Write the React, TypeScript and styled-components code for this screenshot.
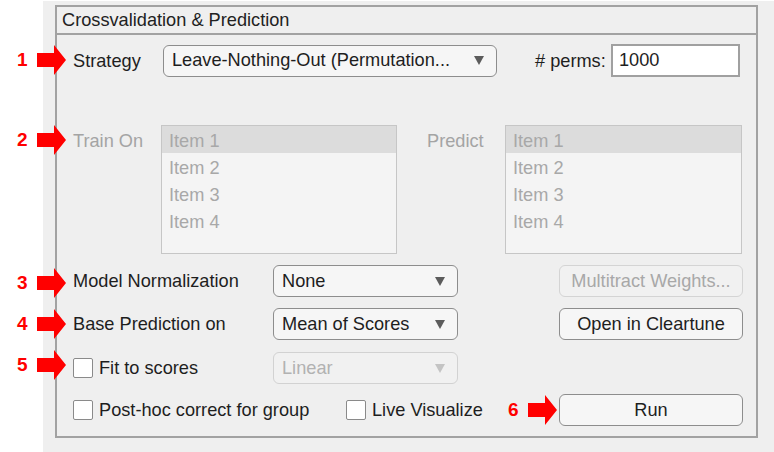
import React from "react";
import styled, { createGlobalStyle } from "styled-components";

const GlobalStyle = createGlobalStyle`
  html, body { margin: 0; padding: 0; background: #ffffff; }
  body { font-family: "Liberation Sans", Arial, Helvetica, sans-serif; }
  * { box-sizing: border-box; }
`;

const Page = styled.div`
  position: relative;
  width: 774px;
  height: 452px;
  display: flex;
  background: #ffffff;
  font-size: 18.2px;
  color: #1e1e1e;
`;

const Gutter = styled.div`
  width: 43px;
  flex: none;
`;

const Surface = styled.div`
  flex: 1;
  margin-top: 1px;
  background: #efefef;
  padding: 4px 16px 14px 12px;
  display: flex;
`;

const Panel = styled.section`
  flex: 1;
  border: 2px solid #a2a2a2;
  display: flex;
  flex-direction: column;
`;

const PanelTitle = styled.header`
  height: 28px;
  border-bottom: 2px solid #a2a2a2;
  padding-left: 5px;
  display: flex;
  align-items: center;
  color: #222;
`;

const PanelBody = styled.div`
  display: flex;
  flex-direction: column;
  padding: 9px 0 0 16px;
`;

const Row = styled.div<{ $top?: number; $h?: number; $align?: string }>`
  display: flex;
  align-items: ${(p) => p.$align ?? "center"};
  margin-top: ${(p) => p.$top ?? 0}px;
  height: ${(p) => p.$h ?? 32}px;
`;

const Label = styled.span<{ $w: number; $disabled?: boolean; $ml?: number; $lh?: number }>`
  width: ${(p) => p.$w}px;
  flex: none;
  margin-left: ${(p) => p.$ml ?? 0}px;
  color: ${(p) => (p.$disabled ? "#a4a4a4" : "#1e1e1e")};
  line-height: ${(p) => p.$lh ?? 22}px;
  white-space: nowrap;
`;

const Select = styled.div<{ $w: number; $h?: number; $disabled?: boolean }>`
  width: ${(p) => p.$w}px;
  height: ${(p) => p.$h ?? 32}px;
  flex: none;
  display: flex;
  align-items: center;
  justify-content: space-between;
  padding: 0 12px 0 8px;
  border: 1px solid ${(p) => (p.$disabled ? "#d2d2d2" : "#8d8d8d")};
  border-radius: 6px;
  background: ${(p) => (p.$disabled ? "#f1f1f1" : "#f6f6f6")};
  color: ${(p) => (p.$disabled ? "#b2b2b2" : "#1e1e1e")};
  white-space: nowrap;
  overflow: hidden;
`;

const Caret = styled.span<{ $disabled?: boolean }>`
  width: 0;
  height: 0;
  border-left: 5.5px solid transparent;
  border-right: 5.5px solid transparent;
  border-top: 9px solid ${(p) => (p.$disabled ? "#c4c4c4" : "#5c5c5c")};
  flex: none;
`;

const TextInput = styled.div`
  width: 129px;
  height: 33px;
  flex: none;
  margin-left: 3px;
  background: #ffffff;
  border: 2px solid #a0a0a0;
  display: flex;
  align-items: center;
  padding-left: 6px;
  color: #1e1e1e;
`;

const ListBox = styled.ul<{ $w: number }>`
  width: ${(p) => p.$w}px;
  height: 129px;
  flex: none;
  margin: 0;
  padding: 0;
  list-style: none;
  border: 1px solid #c6c6c6;
  background: #f4f4f4;
`;

const ListItem = styled.li<{ $selected?: boolean }>`
  height: 27px;
  padding: 2px 0 0 7px;
  line-height: 27px;
  color: #a8a8a8;
  background: ${(p) => (p.$selected ? "#dcdcdc" : "transparent")};
`;

const Button = styled.div<{ $ml?: number; $disabled?: boolean; $h?: number }>`
  width: 184px;
  height: ${(p) => p.$h ?? 32}px;
  flex: none;
  margin-left: ${(p) => p.$ml ?? 0}px;
  display: flex;
  align-items: center;
  justify-content: center;
  border: 1px solid ${(p) => (p.$disabled ? "#d4d4d4" : "#8d8d8d")};
  border-radius: 6px;
  background: ${(p) => (p.$disabled ? "#f1f1f1" : "#f6f6f6")};
  color: ${(p) => (p.$disabled ? "#a8a8a8" : "#1e1e1e")};
  white-space: nowrap;
`;

const Check = styled.label<{ $w?: number }>`
  display: flex;
  align-items: center;
  gap: 6px;
  width: ${(p) => (p.$w ? `${p.$w}px` : "auto")};
  flex: none;
  white-space: nowrap;
`;

const Box = styled.span`
  width: 20px;
  height: 20px;
  flex: none;
  background: #ffffff;
  border: 1px solid #8a8a8a;
  border-radius: 2px;
`;

const Marker = styled.div<{ $x: number; $y: number }>`
  position: absolute;
  left: ${(p) => p.$x}px;
  top: ${(p) => p.$y - 15}px;
  height: 30px;
  display: flex;
  align-items: center;
  gap: 9px;
  color: #ff0000;
  font-weight: 700;
  font-size: 19px;
  pointer-events: none;
`;

const Arrow = () => (
  <svg width="29" height="30" viewBox="0 0 29 30">
    <polygon points="0,8 17,8 17,0 29,15 17,30 17,22 0,22" fill="#ff0000" />
  </svg>
);

const items = ["Item 1", "Item 2", "Item 3", "Item 4"];

export default function App() {
  return (
    <>
      <GlobalStyle />
      <Page>
        <Gutter />
        <Surface>
          <Panel>
            <PanelTitle>Crossvalidation &amp; Prediction</PanelTitle>
            <PanelBody>
              <Row $h={33}>
                <Label $w={90}>Strategy</Label>
                <Select $w={334}>
                  <span>Leave-Nothing-Out (Permutation...</span>
                  <Caret />
                </Select>
                <Label $w={73} $ml={38}># perms:</Label>
                <TextInput>1000</TextInput>
              </Row>
              <Row $top={48} $h={129} $align="flex-start">
                <Label $w={88} $disabled $lh={32}>Train On</Label>
                <ListBox $w={236}>
                  {items.map((t, i) => (
                    <ListItem key={t} $selected={i === 0}>{t}</ListItem>
                  ))}
                </ListBox>
                <Label $w={78} $ml={30} $disabled $lh={32}>Predict</Label>
                <ListBox $w={237}>
                  {items.map((t, i) => (
                    <ListItem key={t} $selected={i === 0}>{t}</ListItem>
                  ))}
                </ListBox>
              </Row>
              <Row $top={11}>
                <Label $w={200}>Model Normalization</Label>
                <Select $w={185}>
                  <span>None</span>
                  <Caret />
                </Select>
                <Button $ml={101} $disabled>Multitract Weights...</Button>
              </Row>
              <Row $top={11}>
                <Label $w={200}>Base Prediction on</Label>
                <Select $w={185}>
                  <span>Mean of Scores</span>
                  <Caret />
                </Select>
                <Button $ml={101}>Open in Cleartune</Button>
              </Row>
              <Row $top={12}>
                <Check $w={200}>
                  <Box />
                  Fit to scores
                </Check>
                <Select $w={185} $disabled>
                  <span>Linear</span>
                  <Caret $disabled />
                </Select>
              </Row>
              <Row $top={10}>
                <Check $w={273}>
                  <Box />
                  Post-hoc correct for group
                </Check>
                <Check $w={213}>
                  <Box />
                  Live Visualize
                </Check>
                <Button>Run</Button>
              </Row>
            </PanelBody>
          </Panel>
        </Surface>
        <Marker $x={17} $y={60}>1<Arrow /></Marker>
        <Marker $x={17} $y={140}>2<Arrow /></Marker>
        <Marker $x={17} $y={283}>3<Arrow /></Marker>
        <Marker $x={17} $y={324}>4<Arrow /></Marker>
        <Marker $x={17} $y={365}>5<Arrow /></Marker>
        <Marker $x={508} $y={410}>6<Arrow /></Marker>
      </Page>
    </>
  );
}
